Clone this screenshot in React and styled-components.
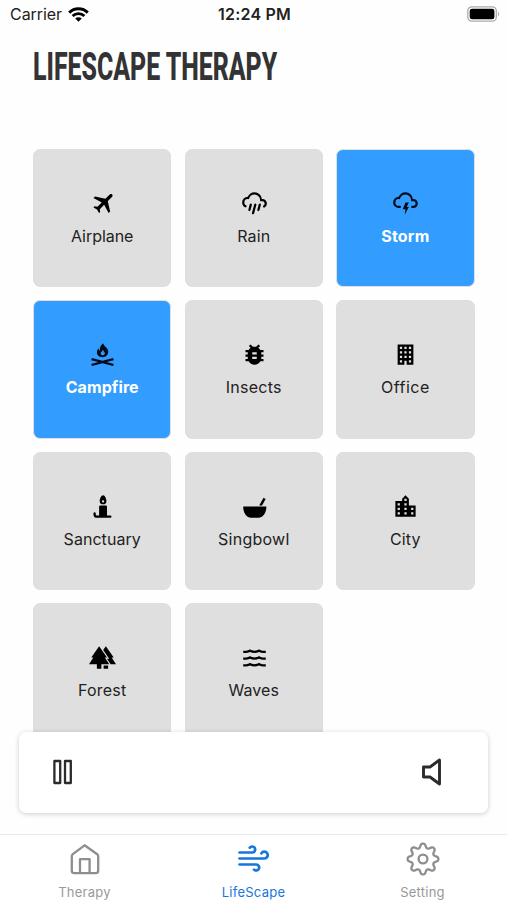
import React from 'react';
import styled, { createGlobalStyle } from 'styled-components';

const Global = createGlobalStyle`
  * { box-sizing: border-box; }
  body { margin: 0; background: #fff; font-family: Inter, 'Liberation Sans', sans-serif; }
`;

const Screen = styled.div`
  width: 507px;
  height: 900px;
  display: flex;
  flex-direction: column;
  overflow: hidden;
  background: #fefefe;
`;
const StatusBar = styled.header`
  height: 30px;
  flex: none;
  display: grid;
  grid-template-columns: 1fr auto 1fr;
  align-items: center;
  padding: 0 7px 2px 10px;
  font-size: 16px;
  color: #222;
`;
const Carrier = styled.div`
  display: flex;
  align-items: center;
  gap: 6px;
  letter-spacing: -0.05px;
`;
const Clock = styled.div`
  margin-left: -1px;
  font-size: 16px;
  font-weight: 600;
  letter-spacing: 0.2px;
`;
const BatterySlot = styled.div`
  display: flex;
  justify-content: flex-end;
`;
const Title = styled.h1`
  margin: 15px 0 0 33px;
  height: 43px;
  flex: none;
  font: 800 39.5px/43px Roboto, sans-serif;
  color: #333;
  white-space: nowrap;
  transform: scaleX(0.63);
  transform-origin: left;
`;
const Content = styled.main`
  height: 645px;
  flex: none;
  padding: 61px 32px 0 33px;
  overflow: hidden;
`;
const Grid = styled.div`
  display: grid;
  grid-template-columns: repeat(3, 138.4px);
  grid-auto-rows: 138.2px;
  column-gap: 13.2px;
  row-gap: 13.3px;
`;
const Card = styled.button`
  display: flex;
  flex-direction: column;
  align-items: center;
  justify-content: flex-start;
  padding: 40px 0 0;
  border: 1.35px solid #dfdfdf;
  border-radius: 7px;
  background: ${(p) => (p.$active ? '#339dff' : '#dfdfdf')};
  color: ${(p) => (p.$active ? '#fff' : '#222')};
  font-family: inherit;
`;
const CardIcon = styled.svg`
  width: 27px;
  height: 27px;
  flex: none;
  margin-left: 1px;
  fill: ${(p) => (p.$active ? '#000c1c' : '#000')};
`;
const Label = styled.span`
  margin-top: 7px;
  font-size: 16px;
  line-height: 24px;
  font-weight: ${(p) => (p.$active ? 700 : 400)};
  letter-spacing: ${(p) => p.$track}px;
`;
const Player = styled.section`
  position: relative;
  width: 469px;
  height: 81px;
  flex: none;
  margin: -1px 0 0 19px;
  padding: 0 45px 1px 33px;
  display: flex;
  align-items: center;
  justify-content: space-between;
  border-radius: 7px;
  background: #fff;
  box-shadow: 0 1px 5px rgba(0, 0, 0, 0.2);
`;
const Tabs = styled.nav`
  margin-top: auto;
  height: 66px;
  flex: none;
  display: grid;
  grid-template-columns: repeat(3, 1fr);
  border-top: 1.5px solid #e8e8e8;
  background: #fff;
`;
const Tab = styled.a`
  display: flex;
  flex-direction: column;
  align-items: center;
  padding-top: 6px;
  color: ${(p) => (p.$active ? '#1676dc' : '#8e8e8e')};
`;
const TabIcon = styled.svg`
  width: 36px;
  height: 36px;
  fill: none;
  stroke: currentColor;
  stroke-width: ${(p) => p.$weight || 2.3};
  stroke-linecap: round;
  stroke-linejoin: round;
`;
const TabText = styled.span`
  margin-top: 7px;
  font-size: 13px;
  line-height: 16px;
  letter-spacing: 0.25px;
  color: ${(p) => (p.$active ? '#1676dc' : '#999')};
`;

const sounds = [
  { name: 'Airplane', track: -0.05, d: 'M20.56 3.91C21.15 4.5 21.15 5.45 20.56 6.03L16.67 9.92L18.79 19.11L17.38 20.53L13.5 13.1L9.6 17L9.96 19.47L8.89 20.53L7.13 17.35L3.94 15.58L5 14.5L7.5 14.87L11.37 11L3.94 7.09L5.36 5.68L14.55 7.8L18.44 3.91C19 3.33 20 3.33 20.56 3.91Z' },
  { name: 'Rain', track: 0.1, d: 'M9,12C9.53,12.14 9.85,12.69 9.71,13.22L8.41,18.05C8.27,18.59 7.72,18.9 7.19,18.76C6.65,18.62 6.34,18.07 6.5,17.54L7.78,12.71C7.92,12.17 8.47,11.86 9,12M13,12C13.53,12.14 13.85,12.69 13.71,13.22L11.64,20.95C11.5,21.5 10.95,21.8 10.41,21.66C9.88,21.5 9.56,20.97 9.7,20.43L11.78,12.71C11.92,12.17 12.47,11.86 13,12M17,12C17.53,12.14 17.85,12.69 17.71,13.22L16.41,18.05C16.27,18.59 15.72,18.9 15.19,18.76C14.65,18.62 14.34,18.07 14.5,17.54L15.78,12.71C15.92,12.17 16.47,11.86 17,12M17,10V9A5,5 0 0,0 12,4C9.5,4 7.45,5.82 7.06,8.19C6.73,8.07 6.37,8 6,8A3,3 0 0,0 3,11C3,12.11 3.6,13.08 4.5,13.6V13.59C5,13.87 5.14,14.5 4.87,14.96C4.59,15.43 4,15.6 3.5,15.32V15.33C2,14.47 1,12.85 1,11A5,5 0 0,1 6,6C7,3.65 9.3,2 12,2C15.43,2 18.24,4.66 18.5,8.03L19,8A4,4 0 0,1 23,12C23,13.5 22.2,14.77 21,15.46V15.46C20.5,15.73 19.91,15.57 19.63,15.09C19.36,14.61 19.5,14 20,13.72V13.73C20.6,13.39 21,12.74 21,12A2,2 0 0,0 19,10H17Z' },
  { name: 'Storm', track: 0.2, active: true, d: 'M6,16A5,5 0 0,1 1,11A5,5 0 0,1 6,6C7,3.65 9.3,2 12,2C15.43,2 18.24,4.66 18.5,8.03L19,8A4,4 0 0,1 23,12A4,4 0 0,1 19,16H18A1,1 0 0,1 17,15A1,1 0 0,1 18,14H19A2,2 0 0,0 21,12A2,2 0 0,0 19,10H17V9A5,5 0 0,0 12,4C9.5,4 7.45,5.82 7.06,8.19C6.73,8.07 6.37,8 6,8A3,3 0 0,0 3,11A3,3 0 0,0 6,14H7A1,1 0 0,1 8,15A1,1 0 0,1 7,16H6M12,11H15L13,15H15L11.25,22L12,17H9.5L12,11Z' },
  { name: 'Campfire', track: 0.1, active: true, d: 'M12.6 2C12.8 4 15.2 5.2 16.4 7.2C18.3 10.4 16.2 14.5 12 14.5C8.4 14.5 6.2 11.5 7.3 8.5C7.6 7.7 8 7 8.6 6.4C8.6 7.4 8.9 8.1 9.6 8.5C9.5 5.8 10.5 3.4 12.6 2M12.4 7.8C12.2 9 10.3 9.8 10.4 11.2C10.5 12.3 11.4 12.8 12.4 12.7C14 12.5 14.6 11.1 13.8 9.8L13.2 10.4C13.3 9.4 13 8.4 12.4 7.8M2.6 15.1L12 17.6L21.4 15.1L22 17L15.7 18.7L22 20.4L21.4 22.3L12 19.7L2.6 22.3L2 20.4L8.3 18.7L2 17Z' },
  { name: 'Insects', track: 0.25, d: 'M20 8h-2.81c-.45-.78-1.07-1.45-1.82-1.96L17 4.41 15.59 3l-2.17 2.17C12.96 5.06 12.49 5 12 5s-.96.06-1.41.17L8.41 3 7 4.41l1.62 1.63C7.88 6.55 7.26 7.22 6.81 8H4v2h2.09c-.05.33-.09.66-.09 1v1H4v2h2v1c0 .34.04.67.09 1H4v2h2.81c1.04 1.79 2.97 3 5.19 3s4.15-1.21 5.19-3H20v-2h-2.09c.05-.33.09-.66.09-1v-1h2v-2h-2v-1c0-.34-.04-.67-.09-1H20V8zm-6 8h-4v-2h4v2zm0-4h-4v-2h4v2z' },
  { name: 'Office', track: 0.5, d: 'M5,3V21H11V17.5H13V21H19V3H5M7,5H9V7H7V5M11,5H13V7H11V5M15,5H17V7H15V5M7,9H9V11H7V9M11,9H13V11H11V9M15,9H17V11H15V9M7,13H9V15H7V13M11,13H13V15H11V13M15,13H17V15H15V13M7,17H9V19H7V17M15,17H17V19H15V17Z' },
  { name: 'Sanctuary', track: 0.05, d: 'M12.5,2C10.84,2 9.5,5.34 9.5,7A3,3 0 0,0 12.5,10A3,3 0 0,0 15.5,7C15.5,5.34 14.16,2 12.5,2M12.5,6.5A1,1 0 0,1 13.5,7.5A1,1 0 0,1 12.5,8.5A1,1 0 0,1 11.5,7.5A1,1 0 0,1 12.5,6.5M10,11A1,1 0 0,0 9,12V20H7A1,1 0 0,1 6,19V18A1,1 0 0,0 5,17A1,1 0 0,0 4,18V19A3,3 0 0,0 7,22H19A1,1 0 0,0 20,21A1,1 0 0,0 19,20H16V12A1,1 0 0,0 15,11H10Z' },
  { name: 'Singbowl', track: 0.25, d: 'M2 12H22.5V13C22.5 17.5 19.5 22 15.5 22H9C5 22 2 17.5 2 13ZM16.2 11L20 4.3L21.9 5.4L18.7 11Z' },
  { name: 'City', track: 0.2, d: 'M19,15H17V13H19M19,19H17V17H19M13,7H11V5H13M13,11H11V9H13M13,15H11V13H13M13,19H11V17H13M7,11H5V9H7M7,15H5V13H7M7,19H5V17H7M15,11V5L12,2L9,5V7H3V21H21V11H15Z' },
  { name: 'Forest', track: 0.2, d: 'M16 12L9 2L2 12H3.86L0 18H7V22H11V18H18L14.14 12H16M20.14 12H22L15 2L12.61 5.41L17.92 13H15.97L19.19 18H24L20.14 12M13 19H17V22H13V19Z' },
  { name: 'Waves', track: 0.1, d: 'M20,12H22V14H20C18.62,14 17.26,13.65 16,13C13.5,14.3 10.5,14.3 8,13C6.74,13.65 5.37,14 4,14H2V12H4C5.39,12 6.78,11.53 8,10.67C10.44,12.38 13.56,12.38 16,10.67C17.22,11.53 18.61,12 20,12M20,6H22V8H20C18.62,8 17.26,7.65 16,7C13.5,8.3 10.5,8.3 8,7C6.74,7.65 5.37,8 4,8H2V6H4C5.39,6 6.78,5.53 8,4.67C10.44,6.38 13.56,6.38 16,4.67C17.22,5.53 18.61,6 20,6M20,18H22V20H20C18.62,20 17.26,19.65 16,19C13.5,20.3 10.5,20.3 8,19C6.74,19.65 5.37,20 4,20H2V18H4C5.39,18 6.78,17.53 8,16.67C10.44,18.38 13.56,18.38 16,16.67C17.22,17.53 18.61,18 20,18Z' },
];

// Eight-lobed cog outline, sampled around the centre.
const gear = Array.from({ length: 160 }, (_, i) => {
  const a = (i / 160) * Math.PI * 2;
  const wave = Math.tanh(1.2 * Math.cos(8 * a)) / Math.tanh(1.2);
  const r = 13.4 + 2 * wave;
  return `${i ? 'L' : 'M'}${(18 + r * Math.sin(a)).toFixed(2)} ${(18 - r * Math.cos(a)).toFixed(2)}`;
}).join('') + 'Z';

export default function App() {
  return (
    <>
      <Global />
      <Screen>
        <StatusBar>
          <Carrier>
            Carrier
            <svg width="21" height="15" viewBox="0 0 21 15" fill="none" stroke="#000" strokeWidth="2.9">
              <path d="M1.2 5.6A13.2 13.2 0 0 1 19.8 5.6M4.6 9A8.4 8.4 0 0 1 16.4 9" />
              <path d="M10.5 14.8L7.2 11.5A4.7 4.7 0 0 1 13.8 11.5Z" fill="#000" stroke="none" />
            </svg>
          </Carrier>
          <Clock>12:24 PM</Clock>
          <BatterySlot>
            <svg width="33" height="16" viewBox="0 0 33 16">
              <rect x="0.8" y="0.8" width="28.5" height="14.4" rx="4" fill="#fff" stroke="#aaa" strokeWidth="1.3" />
              <rect x="2.7" y="2.7" width="24.7" height="10.6" rx="2.4" />
              <path d="M31 5.5Q33.2 8 31 10.5Z" fill="#aaa" />
            </svg>
          </BatterySlot>
        </StatusBar>
        <Title>LIFESCAPE THERAPY</Title>
        <Content>
          <Grid>
            {sounds.map((s) => (
              <Card key={s.name} $active={s.active}>
                <CardIcon viewBox="0 0 24 24" $active={s.active}><path fillRule="evenodd" d={s.d} /></CardIcon>
                <Label $active={s.active} $track={s.track}>{s.name}</Label>
              </Card>
            ))}
          </Grid>
        </Content>
        <Player>
          <svg width="22" height="26" viewBox="0 0 22 26" fill="none" stroke="#2b2b2b" strokeWidth="2.3" strokeLinejoin="round">
            <path d="M2.4 2H8.2V24H2.4ZM13 2H18.8V24H13Z" />
          </svg>
          <svg width="22" height="28" viewBox="0 0 22 28" fill="none" stroke="#2b2b2b" strokeWidth="2.9" strokeLinejoin="round">
            <path d="M2.5 9H9L18.5 2V26L9 19H2.5Z" />
          </svg>
        </Player>
        <Tabs>
          <Tab>
            <TabIcon viewBox="0 0 36 36">
              <path d="M4.8 15.2Q4.8 14 5.8 13.2L17.6 4.3L30.2 13.2Q31.2 14 31.2 15.2V29.8Q31.2 32.2 28.6 32.2H7.4Q4.8 32.2 4.8 29.8ZM13 32V18.2H22.6V32" />
            </TabIcon>
            <TabText>Therapy</TabText>
          </Tab>
          <Tab $active>
            <TabIcon viewBox="0 0 36 36" $weight={2.7}>
              <path d="M3.5 11.5H16A3 3 0 1 0 13.8 6.6M3.5 17.5H28.4A3.4 3.4 0 1 0 25.4 12.4M3.5 23.5H20.3A3 3 0 1 1 18 28.6" />
            </TabIcon>
            <TabText $active>LifeScape</TabText>
          </Tab>
          <Tab>
            <TabIcon viewBox="0 0 36 36">
              <path d={gear} />
              <circle cx="18" cy="18" r="4.4" />
            </TabIcon>
            <TabText>Setting</TabText>
          </Tab>
        </Tabs>
      </Screen>
    </>
  );
}
